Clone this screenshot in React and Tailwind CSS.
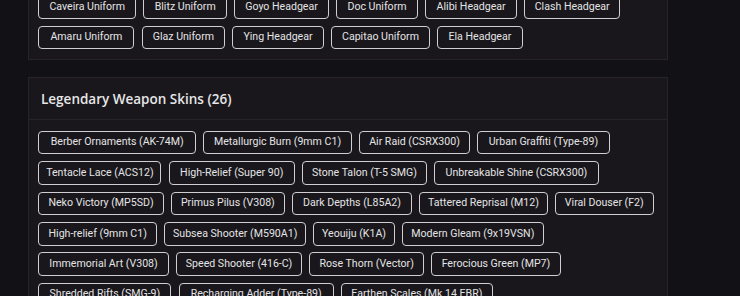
import React from "react";

const topRows = [
  [
    ["Caveira Uniform", "w-[97.8px]"],
    ["Blitz Uniform", "w-[83.8px]"],
    ["Goyo Headgear", "w-[94.5px]"],
    ["Doc Uniform", "w-[82.1px]"],
    ["Alibi Headgear", "w-[91.8px]"],
    ["Clash Headgear", "w-[96px]"],
  ],
  [
    ["Amaru Uniform", "w-[96.2px]"],
    ["Glaz Uniform", "w-[83.4px]"],
    ["Ying Headgear", "w-[91.5px]"],
    ["Capitao Uniform", "w-[99.1px]"],
    ["Ela Headgear", "w-[85.4px]"],
  ],
];

const legRows = [
  [
    ["Berber Ornaments (AK-74M)", "w-[157.8px]"],
    ["Metallurgic Burn (9mm C1)", "w-[148.5px]"],
    ["Air Raid (CSRX300)", "w-[111.1px]"],
    ["Urban Graffiti (Type-89)", "w-[132.4px]"],
  ],
  [
    ["Tentacle Lace (ACS12)", "w-[123.2px]"],
    ["High-Relief (Super 90)", "w-[126.1px]"],
    ["Stone Talon (T-5 SMG)", "w-[125.1px]"],
    ["Unbreakable Shine (CSRX300)", "w-[164.4px]"],
  ],
  [
    ["Neko Victory (MP5SD)", "w-[125.5px]"],
    ["Primus Pilus (V308)", "w-[113.8px]"],
    ["Dark Depths (L85A2)", "w-[120.1px]"],
    ["Tattered Reprisal (M12)", "w-[128.5px]"],
    ["Viral Douser (F2)", "w-[98.7px]"],
  ],
  [
    ["High-relief (9mm C1)", "w-[118.8px]"],
    ["Subsea Shooter (M590A1)", "w-[141.8px]"],
    ["Yeouiju (K1A)", "w-[81.5px]"],
    ["Modern Gleam (9x19VSN)", "w-[141.7px]"],
  ],
  [
    ["Immemorial Art (V308)", "w-[130.5px]"],
    ["Speed Shooter (416-C)", "w-[126.1px]"],
    ["Rose Thorn (Vector)", "w-[114.8px]"],
    ["Ferocious Green (MP7)", "w-[129.4px]"],
  ],
  [
    ["Shredded Rifts (SMG-9)", "w-[133.2px]"],
    ["Recharging Adder (Type-89)", "w-[155.1px]"],
    ["Earthen Scales (Mk 14 EBR)", "w-[151.7px]"],
  ],
  [
    ["Glacial Bloom (R4-C)", "w-[124px]"],
    ["Royal Ember (P90)", "w-[106px]"],
  ],
];

function Tag({ label, w }) {
  return (
    <span
      className={
        "flex h-[23.5px] shrink-0 items-center justify-center whitespace-nowrap rounded-[4px] border border-[#cfcfd2] font-['Roboto',sans-serif] text-[10.6px] leading-none text-[#e4e4e6] " +
        w
      }
    >
      {label}
    </span>
  );
}

function Card({ title, rows }) {
  return (
    <section className="w-[640px] border border-[#262428] bg-[#19171b]">
      <header className="flex h-[42px] items-center border-b border-[#262428] px-[12px] text-[13.5px] font-semibold text-[#e6e6e8]">
        {title}
      </header>
      <div className="flex flex-col gap-y-[6.9px] px-[9.3px] pt-[10.5px] pb-[10px]">
        {rows.map((r, i) => (
          <div key={i} className="flex gap-x-[7.2px]">
            {r.map(([t, w]) => (
              <Tag key={t} label={t} w={w} />
            ))}
          </div>
        ))}
      </div>
    </section>
  );
}

export default function App() {
  return (
    <div className="h-[296px] w-[740px] overflow-hidden bg-[#121115] font-['Open_Sans','Noto_Sans',sans-serif]">
      <div className="ml-[28px] -mt-[58px] flex flex-col gap-[17px]">
        <Card title="Legendary Operator Cosmetics (11)" rows={topRows} />
        <Card title="Legendary Weapon Skins (26)" rows={legRows} />
      </div>
    </div>
  );
}
